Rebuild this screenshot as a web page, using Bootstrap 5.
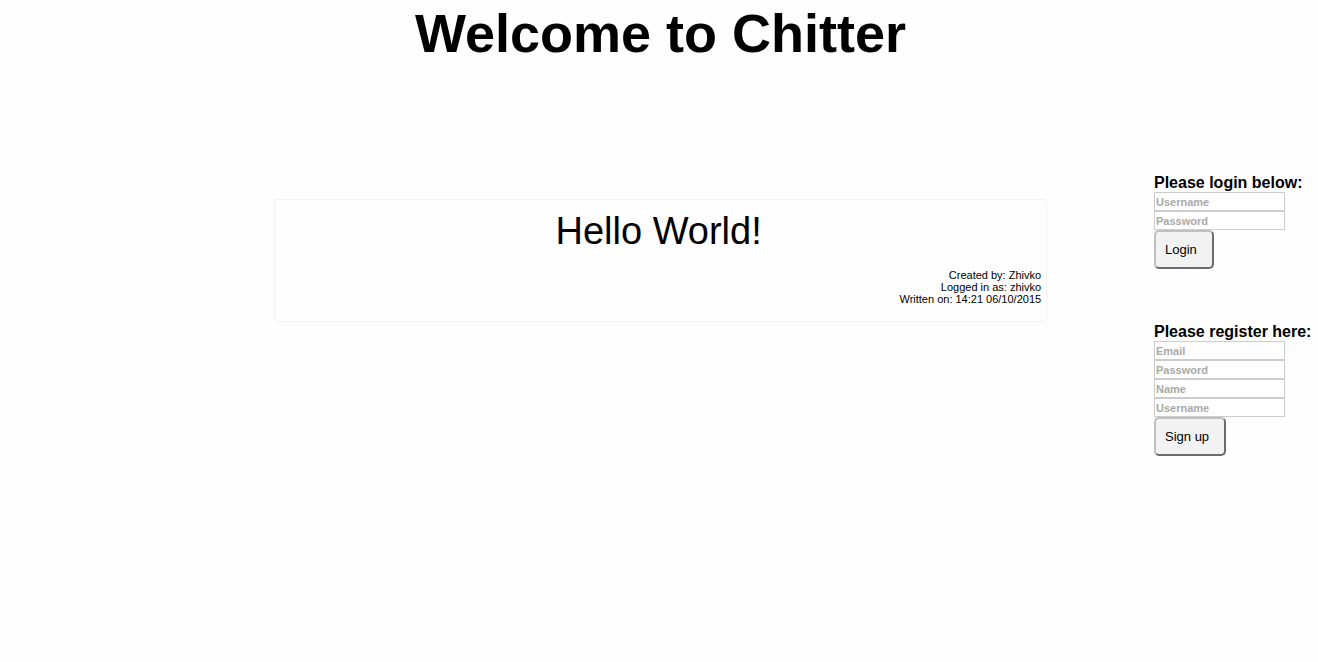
<!DOCTYPE html>
<html lang="en">
<head>
<meta charset="utf-8">
<meta name="viewport" content="width=device-width, initial-scale=1">
<title>Chitter</title>
<link href="https://cdn.jsdelivr.net/npm/bootstrap@5.3.0/dist/css/bootstrap.min.css" rel="stylesheet">
<style>
  body { font-family: "Liberation Sans", Arial, sans-serif; color: #000; background: #fefefe; }
  .site-title { font-size: 54px; line-height: 66px; padding-left: 3px; }
  .page-body { padding-top: 107px; }
  .feed { width: 58.65%; margin-left: 20.8%; margin-top: 26px; }
  .peep { border: 1px solid #f2f2f2; border-radius: 3px; padding: 9px 5px 16px; }
  .peep-text { font-size: 38px; line-height: 44px; margin-bottom: 16px; padding-right: 4px; }
  .peep-meta { font-size: 11px; line-height: 12px; }
  .account { width: 164px; }
  .form-title { font-size: 16px; line-height: 19px; }
  .field { width: 131px; height: 19px; padding: 1px; border: 1px solid #ccc; border-radius: 0; background: #fff; font-size: 11px; line-height: 15px; }
  .field::placeholder { color: #a9a9a9; opacity: 1; font-weight: 700; }
  .send { height: 39px; padding: 0 15px 0 9px; border: 2px solid; border-color: #c0c0c0 #6c6c6c #6c6c6c #c0c0c0; border-radius: 5px; background: #f2f2f2; color: #000; font-size: 13px; line-height: 16px; }
  .register { margin-top: 53px; }
</style>
</head>
<body>
<header>
  <h1 class="site-title text-center fw-bold mb-0">Welcome to Chitter</h1>
</header>
<div class="page-body d-flex align-items-start">
  <main class="feed">
    <article class="peep">
      <p class="peep-text text-center">Hello World!</p>
      <div class="peep-meta text-end">
        <div>Created by: Zhivko</div>
        <div>Logged in as: zhivko</div>
        <div>Written on: 14:21 06/10/2015</div>
      </div>
    </article>
  </main>
  <aside class="account ms-auto flex-shrink-0">
    <form class="d-flex flex-column align-items-start">
      <h2 class="form-title fw-bold text-nowrap mb-0">Please login below:</h2>
      <input class="field" type="text" placeholder="Username" aria-label="Username">
      <input class="field" type="password" placeholder="Password" aria-label="Password">
      <button class="btn send" type="submit">Login</button>
    </form>
    <form class="register d-flex flex-column align-items-start">
      <h2 class="form-title fw-bold text-nowrap mb-0">Please register here:</h2>
      <input class="field" type="email" placeholder="Email" aria-label="Email">
      <input class="field" type="password" placeholder="Password" aria-label="New password">
      <input class="field" type="text" placeholder="Name" aria-label="Name">
      <input class="field" type="text" placeholder="Username" aria-label="New username">
      <button class="btn send" type="submit">Sign up</button>
    </form>
  </aside>
</div>
<script src="https://cdn.jsdelivr.net/npm/bootstrap@5.3.0/dist/js/bootstrap.bundle.min.js"></script>
</body>
</html>
